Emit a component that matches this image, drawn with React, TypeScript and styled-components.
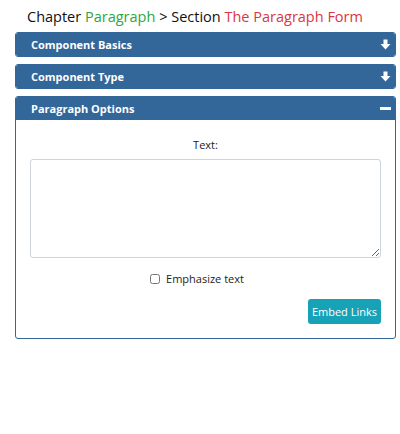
import React, { useState } from "react";
import styled, { createGlobalStyle } from "styled-components";

const GlobalStyle = createGlobalStyle`
  body {
    margin: 0;
    background: #ffffff;
    font-family: "Open Sans", "Noto Sans", sans-serif;
    color: #212529;
  }
`;

const Page = styled.div`
  padding: 6px 4px 0 15px;
`;

const Title = styled.h1`
  margin: 0 0 4px 12px;
  font-size: 14.5px;
  font-weight: 400;
  line-height: 22px;
  color: #111;
`;

const Tone = styled.span<{ $color: string }>`
  color: ${(p) => p.$color};
`;

const Panel = styled.div`
  border: 1px solid #336699;
  border-radius: 3px;
  margin-bottom: 7px;
  overflow: hidden;
  background: #fff;
`;

const PanelHeader = styled.div`
  display: flex;
  align-items: center;
  justify-content: space-between;
  height: 23px;
  padding: 0 4px 0 15px;
  background: #336699;
  color: #fff;
  font-size: 11px;
  font-weight: 700;
  cursor: pointer;
`;

const PanelBody = styled.div`
  display: flex;
  flex-direction: column;
  align-items: center;
  padding: 16px 14px 14px 14px;
  font-size: 11px;
`;

const Label = styled.label`
  line-height: 18px;
  margin-bottom: 5px;
  color: #222;
`;

const TextArea = styled.textarea`
  box-sizing: border-box;
  width: 100%;
  height: 99px;
  border: 1px solid #ced4da;
  border-radius: 3px;
  font-family: inherit;
  font-size: 11px;
  padding: 4px 8px;
  margin: 0;
  outline: none;
`;

const CheckRow = styled.label`
  display: flex;
  align-items: center;
  gap: 6px;
  margin-top: 12px;
  line-height: 18px;
  color: #222;
  padding-right: 17px;
`;

const Check = styled.input`
  margin: 0;
  width: 10px;
  height: 10px;
`;

const Actions = styled.div`
  align-self: stretch;
  display: flex;
  justify-content: flex-end;
  margin-top: 11px;
`;

const EmbedButton = styled.button`
  background: #17a2b8;
  color: #fff;
  border: none;
  border-radius: 3px;
  height: 25px;
  padding: 0 4px;
  font-family: inherit;
  font-size: 11px;
  cursor: pointer;
`;

const ArrowIcon = () => (
  <svg width="11" height="11" viewBox="0 0 11 11">
    <path d="M3.5 0.5h4v4.5h3L5.5 10.5 0.5 5h3z" fill="#fff" />
  </svg>
);

const MinusIcon = () => (
  <svg width="11" height="11" viewBox="0 0 11 11">
    <rect x="0" y="4" width="11" height="3" fill="#fff" />
  </svg>
);

const sections = ["Component Basics", "Component Type", "Paragraph Options"];

const App: React.FC = () => {
  const [open, setOpen] = useState<number>(2);
  const [emphasize, setEmphasize] = useState(false);

  return (
    <>
      <GlobalStyle />
      <Page>
        <Title>
          Chapter <Tone $color="#28a745">Paragraph</Tone> &gt; Section{" "}
          <Tone $color="#dc3545">The Paragraph Form</Tone>
        </Title>
        {sections.map((name, i) => (
          <Panel key={name}>
            <PanelHeader onClick={() => setOpen(i)}>
              {name}
              {open === i ? <MinusIcon /> : <ArrowIcon />}
            </PanelHeader>
            {open === i && (
              <PanelBody>
                <Label htmlFor="para-text">Text:</Label>
                <TextArea id="para-text" />
                <CheckRow>
                  <Check
                    type="checkbox"
                    checked={emphasize}
                    onChange={(e) => setEmphasize(e.target.checked)}
                  />
                  Emphasize text
                </CheckRow>
                <Actions>
                  <EmbedButton>Embed Links</EmbedButton>
                </Actions>
              </PanelBody>
            )}
          </Panel>
        ))}
      </Page>
    </>
  );
};

export default App;
